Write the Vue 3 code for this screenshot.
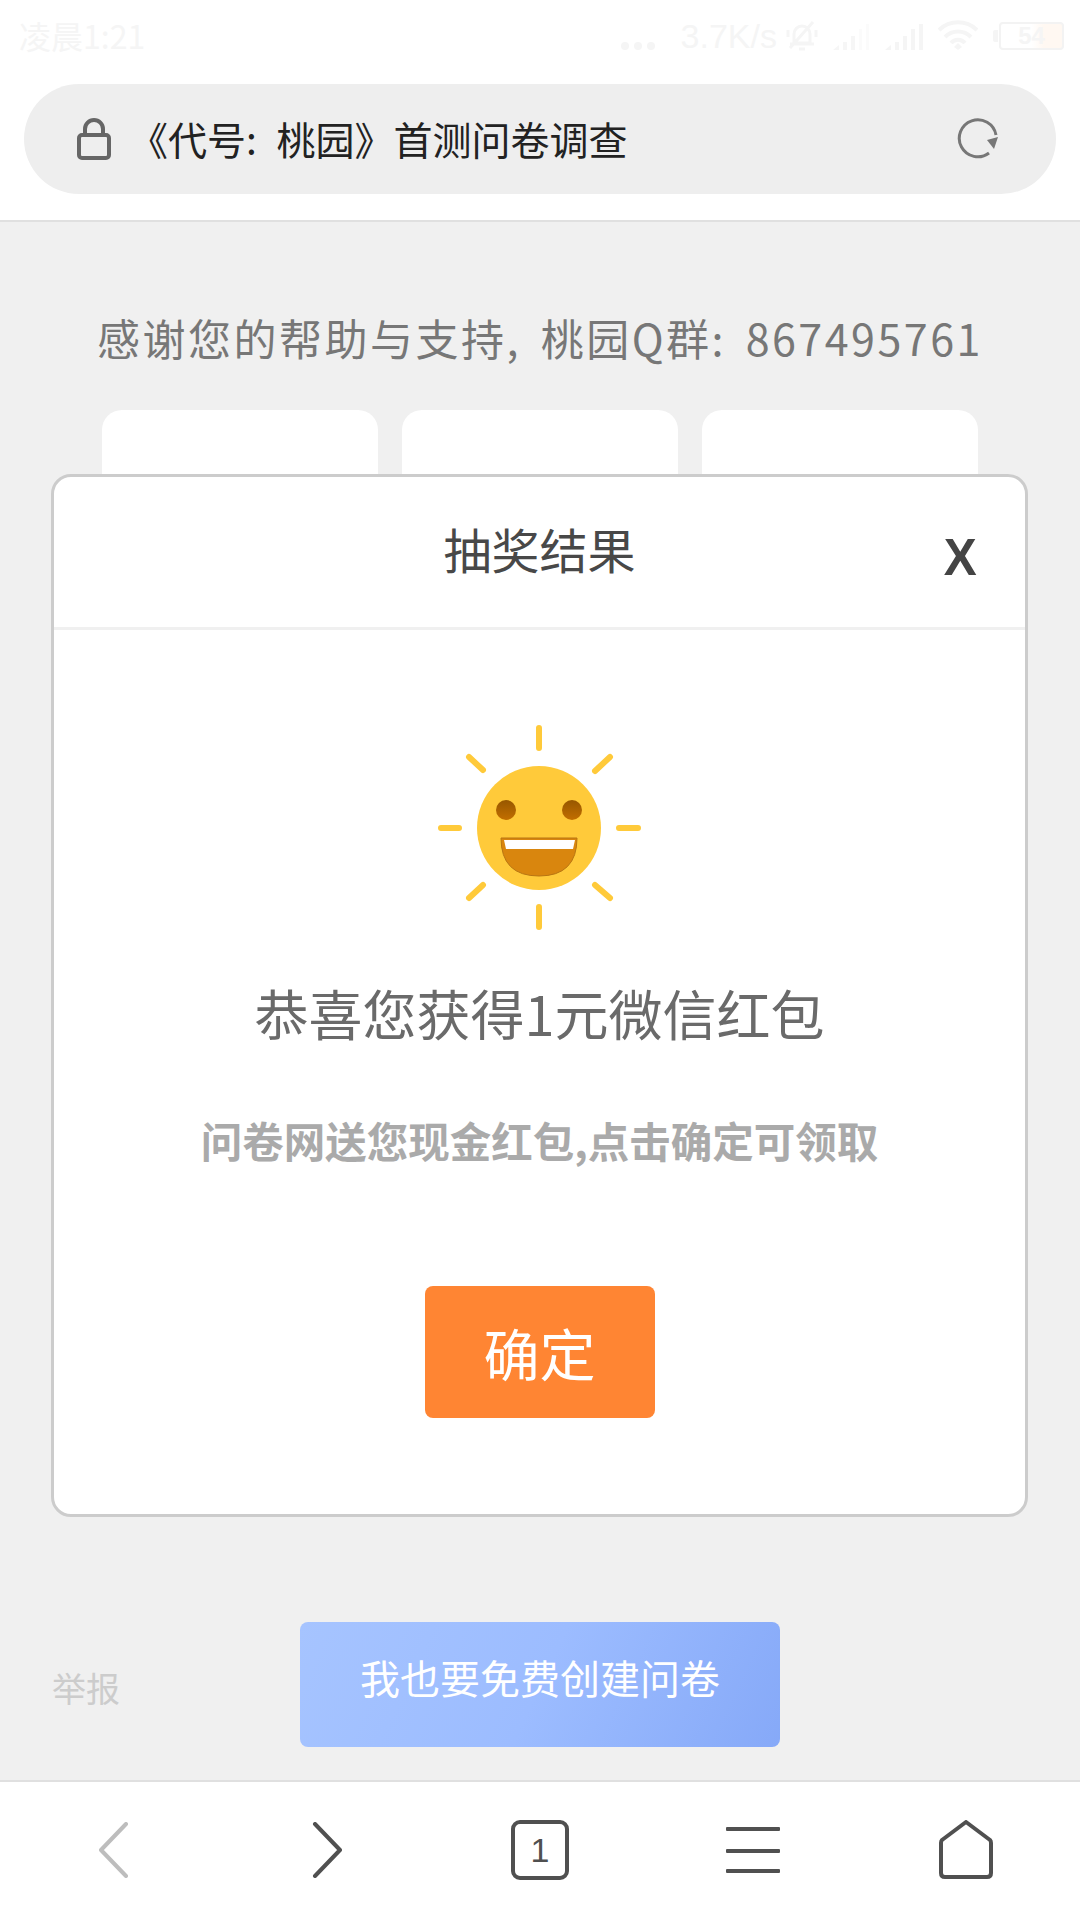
<template>
  <div class="screen">
    <header class="top">
      <div class="status">
        <span class="time">凌晨1:21</span>
        <div class="status-right">
          <span class="dots"><i></i><i></i><i></i></span>
          <span class="speed">3.7K/s</span>
          <svg class="st-icon bell" width="32" height="32" viewBox="0 0 32 32" fill="none" stroke="#f5f5f5" stroke-width="3">
            <path d="M8 23 V14 a8 8 0 0 1 16 0 V23 Z M4 24 H28 M13 29 H19 M4 28 L27 2 M2 10 V17 M30 10 V17" />
          </svg>
          <svg class="st-icon" width="37" height="27" viewBox="0 0 37 27" fill="#f6f6f6">
            <path d="M0 27 L6 22 V27 Z M10 19 H14 V27 H10 Z M18 13 H22 V27 H18 Z" />
            <path d="M26 6 H29 V27 H26 Z M33 1 H36 V27 H33 Z" fill="#fbfbfb" />
          </svg>
          <svg class="st-icon" width="38" height="27" viewBox="0 0 38 27" fill="#f5f5f5">
            <path d="M0 27 L6 22 V27 Z M10 19 H14 V27 H10 Z M18 13 H22 V27 H18 Z M26 6 H30 V27 H26 Z M34 1 H38 V27 H34 Z" />
          </svg>
          <svg class="st-icon" width="40" height="32" viewBox="0 0 40 32" fill="none" stroke="#f5f5f5" stroke-width="4">
            <path d="M1 10 a27 27 0 0 1 38 0 M7 17 a18 18 0 0 1 26 0 M13 23 a9 9 0 0 1 14 0" />
            <path d="M16 27 L20 23 L24 27 L20 30 Z" fill="#f5f5f5" stroke="none" />
          </svg>
          <div class="battery"><span class="nub"></span><span class="cell">54</span></div>
        </div>
      </div>
      <div class="address">
        <svg class="lock" width="34" height="42" viewBox="0 0 34 42" fill="none" stroke="#666" stroke-width="4">
          <rect x="2" y="17" width="30" height="23" rx="3" />
          <path d="M8 17 V11 a9 9 0 0 1 18 0 V17" />
        </svg>
        <span class="page-title">《代号: 桃园》首测问卷调查</span>
        <svg class="refresh" width="42" height="42" viewBox="0 0 42 42" fill="none">
          <path d="M32 35 A18.5 18.5 0 1 1 39 17" stroke="#777" stroke-width="3" />
          <path d="M30 22 L41 19 L37 31 Z" fill="#777" />
        </svg>
      </div>
    </header>

    <main class="page">
      <p class="thanks">感谢您的帮助与支持, 桃园Q群: 867495761</p>
      <div class="cards">
        <div class="card"></div>
        <div class="card"></div>
        <div class="card"></div>
      </div>
      <div class="foot">
        <span class="report">举报</span>
        <button class="create">我也要免费创建问卷</button>
      </div>
    </main>

    <nav class="nav">
      <svg width="32" height="56" viewBox="0 0 32 56" fill="none" stroke="#bdbdbd" stroke-width="4" stroke-linecap="round" stroke-linejoin="round">
        <path d="M28 2 L3 28 L28 54" />
      </svg>
      <svg width="32" height="56" viewBox="0 0 32 56" fill="none" stroke="#505050" stroke-width="4" stroke-linecap="round" stroke-linejoin="round">
        <path d="M4 2 L29 28 L4 54" />
      </svg>
      <div class="tabs">1</div>
      <svg width="56" height="50" viewBox="0 0 56 50" fill="#505050">
        <rect x="1" y="2" width="54" height="4" rx="1" />
        <rect x="1" y="24" width="54" height="4" rx="1" />
        <rect x="1" y="44" width="54" height="4" rx="1" />
      </svg>
      <svg width="56" height="60" viewBox="0 0 56 60" fill="none" stroke="#505050" stroke-width="4" stroke-linejoin="round">
        <path d="M28 2 L52 20 Q53 21 53 23 V53 Q53 57 49 57 H7 Q3 57 3 53 V23 Q3 21 4 20 Z" />
      </svg>
    </nav>

    <section class="modal">
      <div class="modal-head">
        <h2 class="modal-title">抽奖结果</h2>
        <span class="close">X</span>
      </div>
      <div class="modal-body">
        <svg class="sun" width="280" height="250" viewBox="0 0 280 250">
          <defs>
            <linearGradient id="eye" x1="0" y1="0" x2="0" y2="1">
              <stop offset="0" stop-color="#975700" />
              <stop offset="1" stop-color="#c26e00" />
            </linearGradient>
          </defs>
          <g stroke="#ffca3a" stroke-width="6" stroke-linecap="round">
            <path d="M139 28 V48 M139 207 V227 M41 128 H59 M219 128 H238 M69 57 L83 70 M210 57 L195 71 M83 185 L69 198 M195 185 L210 198" />
          </g>
          <circle cx="139" cy="128" r="62" fill="#ffca3a" />
          <circle cx="106" cy="110" r="10" fill="url(#eye)" />
          <circle cx="172" cy="110" r="10" fill="url(#eye)" />
          <path d="M101 138 H177 Q177 176 139 176 Q101 176 101 138 Z" fill="#d9860e" stroke="#b87512" stroke-width="1" />
          <path d="M104 140 H175 L173 149 H106 Z" fill="#fff" />
        </svg>
        <p class="prize">恭喜您获得1元微信红包</p>
        <p class="hint">问卷网送您现金红包,点击确定可领取</p>
        <button class="ok">确定</button>
      </div>
    </section>
  </div>
</template>

<script setup>
</script>

<style>
html, body { margin: 0; background: #f0f0f0; }
</style>

<style scoped>
.screen {
  position: relative;
  width: 1080px;
  height: 1920px;
  display: flex;
  flex-direction: column;
  overflow: hidden;
  font-family: "Noto Sans CJK SC", "Noto Sans", sans-serif;
}
.top {
  height: 220px;
  background: #fff;
  border-bottom: 2px solid #e0e0e0;
  box-sizing: content-box;
}
.status {
  height: 74px;
  display: flex;
  align-items: center;
  justify-content: space-between;
  padding: 0 16px 0 19px;
  color: #f5f5f5;
}
.time { font-size: 32px; margin-top: -4px; }
.status-right { display: flex; align-items: center; gap: 15px; margin-top: -2px; }
.dots { display: flex; gap: 5px; margin: 20px 11px 0 0; }
.dots i { width: 8px; height: 8px; border-radius: 50%; background: #f5f5f5; }
.speed { font-family: "Liberation Sans", sans-serif; font-size: 34px; margin-right: -6px; }
.battery { display: flex; align-items: center; margin-left: 0; }
.nub { width: 5px; height: 12px; background: #f5f5f5; border-radius: 2px 0 0 2px; margin-right: 1px; }
.cell {
  width: 61px;
  height: 24px;
  border: 2px solid #f3f3f3;
  border-radius: 4px;
  font: bold 24px/24px "Liberation Sans", sans-serif;
  text-align: center;
  background: linear-gradient(90deg, #fff 50%, #fff8f2 70%);
}
.address {
  height: 110px;
  margin: 10px 24px 0;
  border-radius: 55px;
  background: #eee;
  display: flex;
  align-items: center;
  padding: 0 57px 0 53px;
}
.lock { flex: none; }
.page-title { flex: 1; margin-left: 18px; font-size: 39px; color: #222; white-space: nowrap; margin-top: -2px; word-spacing: 11px; }
.refresh { flex: none; }
.page {
  flex: 1;
  background: #f0f0f0;
  display: flex;
  flex-direction: column;
}
.thanks {
  margin: 87px 0 0;
  font-size: 43px;
  line-height: 56px;
  color: #777;
  text-align: center;
  letter-spacing: 2.5px;
  word-spacing: 7.5px;
}
.cards { display: flex; justify-content: center; gap: 24px; margin-top: 45px; }
.card { width: 276px; height: 300px; border-radius: 20px; background: #fff; }
.foot {
  margin-top: auto;
  height: 158px;
  position: relative;
  display: flex;
  justify-content: center;
  align-items: flex-start;
}
.report {
  position: absolute;
  left: 52px;
  top: 42px;
  font-size: 34px;
  line-height: 48px;
  color: #ccc;
}
.create {
  width: 480px;
  height: 125px;
  border: 0;
  border-radius: 8px;
  background: linear-gradient(115deg, #a6c4ff 0%, #9cbcff 50%, #86a9f8 100%);
  color: #fff;
  font: 40px/1 "Noto Sans CJK SC", sans-serif;
  padding: 0 0 16px;
}
.nav {
  height: 140px;
  background: #fff;
  border-top: 2px solid #e0e0e0;
  display: grid;
  grid-template-columns: repeat(5, 1fr);
  justify-items: center;
  align-items: center;
  padding: 0 8px 2px;
  box-sizing: border-box;
}
.tabs {
  width: 50px;
  height: 52px;
  border: 4px solid #505050;
  border-radius: 9px;
  font: 34px/52px "Liberation Sans", sans-serif;
  text-align: center;
  color: #505050;
}
.modal {
  position: absolute;
  left: 51px;
  top: 474px;
  width: 977px;
  height: 1043px;
  background: #fff;
  border: 3px solid #ccc;
  border-radius: 20px;
  box-sizing: border-box;
}
.modal-head {
  position: relative;
  height: 153px;
  border-bottom: 3px solid #f0f0f0;
  box-sizing: border-box;
  text-align: center;
}
.modal-title {
  margin: 0;
  font-size: 48px;
  font-weight: 400;
  line-height: 142px;
  color: #484848;
}
.close {
  position: absolute;
  right: 47px;
  top: 50px;
  font: bold 52px/60px "Liberation Sans", sans-serif;
  color: #444;
  transform: scaleX(0.95);
}
.modal-body { display: flex; flex-direction: column; align-items: center; }
.sun { margin-top: 70px; }
.prize { margin: 25px 0 0; font-size: 54px; line-height: 76px; color: #6a6a6a; }
.hint { margin: 61px 0 0; font-size: 41.5px; line-height: 56px; font-weight: 700; color: #aaa; }
.ok {
  margin-top: 118px;
  width: 230px;
  height: 132px;
  border: 0;
  border-radius: 8px;
  background: #ff8533;
  color: #fff;
  font: 56px/1 "Noto Sans CJK SC", sans-serif;
}
</style>
